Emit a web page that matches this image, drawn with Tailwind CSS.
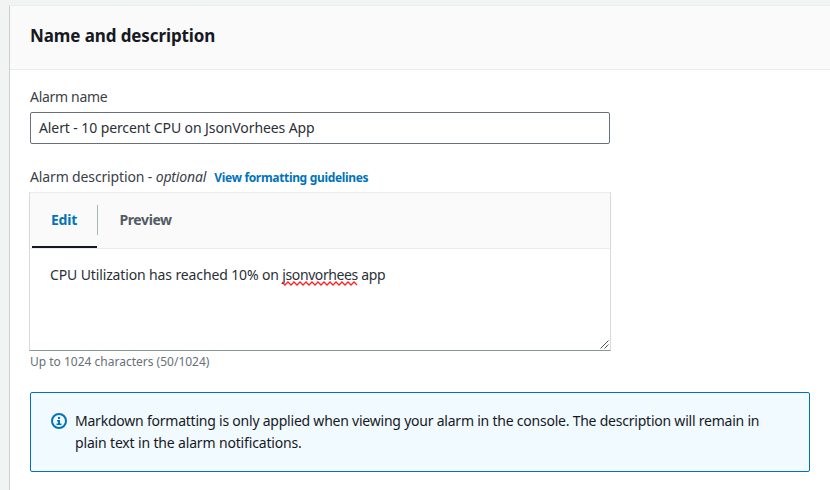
<!DOCTYPE html>
<html lang="en">
<head>
<meta charset="utf-8">
<title>Name and description</title>
<script src="https://cdn.jsdelivr.net/npm/@tailwindcss/browser@4"></script>
</head>
<body class="h-[490px] overflow-hidden bg-[#f2f3f3] pt-[5px] pl-[9px] font-['Noto_Sans',sans-serif] text-sm text-[#16191f]">
<main class="h-[485px] w-[840px] border-t border-l border-t-[#eaeded] border-l-[#c9cecf] bg-white">
  <header class="flex h-16 items-center border-b border-[#eaeded] bg-[#fafafa] px-5 pb-[3px]">
    <h2 class="text-[17px] leading-[22px] font-bold tracking-[-0.1px] whitespace-nowrap">Name and description</h2>
  </header>
  <section class="flex w-[820px] flex-col pt-4 pl-5">
    <label class="h-[22px] leading-[22px] text-[#3b4047]"><span class="tracking-[-0.3px]">Alarm name</span></label>
    <div class="mt-[4px] flex h-8 w-[580px] items-center rounded-[2px] border border-[#687078] px-2 text-[#2b2f36]"><span class="tracking-[-0.1px] whitespace-nowrap">Alert - 10 percent CPU on JsonVorhees App</span></div>
    <div class="mt-[22px] flex h-[22px] items-center leading-[22px] whitespace-nowrap text-[#3b4047]">
      <span class="tracking-[-0.14px]">Alarm description - <i>optional</i></span>
      <a class="ml-2 pt-px text-xs leading-[22px] font-bold tracking-[-0.33px] text-[#0073bb]">View formatting guidelines</a>
    </div>
    <div class="relative mt-1 -ml-px flex h-[159px] w-[582px] flex-col border border-x-[#d5dbdb] border-t-[#eaeded] border-b-[#879596]">
      <nav class="flex h-14 shrink-0 border-b border-[#eaeded] bg-[#fafafa] pl-[2px] font-bold">
        <div class="flex w-[65px] justify-center border-b-2 border-[#16191f] pt-[17px] pr-px text-[#0073bb]"><span class="tracking-[-0.2px]">Edit</span></div>
        <div class="mt-3 h-[30px] w-px bg-[#aab7b8]"></div>
        <div class="pt-[17px] pl-[21.500px] text-[#545b64]"><span class="tracking-[-0.4px]">Preview</span></div>
      </nav>
      <p class="pt-[15px] pl-5 leading-[22px] whitespace-nowrap text-[#2b2f36]"><span class="tracking-[-0.13px]">CPU Utilization has reached 10% on <span class="relative tracking-[-0.4px]">jsonvorhees<svg class="absolute top-[16px] left-0" width="76" height="5" viewBox="0 0 76 5" fill="none" stroke="#f22" stroke-width="1.3"><path d="M0 1l3 3 3-3 3 3 3-3 3 3 3-3 3 3 3-3 3 3 3-3 3 3 3-3 3 3 3-3 3 3 3-3 3 3 3-3 3 3 3-3 3 3 3-3 3 3 3-3 3 3"/></svg></span><span class="tracking-[-0.3px]"> app</span></span></p>
      <svg class="absolute right-[1px] bottom-[1px]" width="9" height="9" viewBox="0 0 9 9" stroke="#555" stroke-width="1"><path d="M.5 8.500l8-8M4.500 8.500l4-4"/></svg>
    </div>
    <div class="h-[22px] text-xs leading-[22px] text-[#687078]"><span>Up to 1024 characters (50/1024)</span></div>
    <div class="mt-[19px] flex h-20 w-[780px] rounded-[2px] border border-[#0073bb] bg-[#f1faff] pt-[17px] pl-5">
      <svg class="mt-[3px] shrink-0" width="16" height="16" viewBox="0 0 16 16" fill="none" stroke="#0073bb" stroke-width="2"><circle cx="8" cy="8" r="7"/><path d="M8 11V7M8 4v2"/><path stroke-width="1.500" d="M6 7.750h2M5.500 11.250h5"/></svg>
      <div class="ml-2 leading-[22px] whitespace-nowrap"><span class="tracking-[-0.225px]">Markdown formatting is only applied when viewing your alarm in the console. The description will remain in</span><br><span class="tracking-[-0.16px]">plain text in the alarm notifications.</span></div>
    </div>
  </section>
</main>
</body>
</html>
